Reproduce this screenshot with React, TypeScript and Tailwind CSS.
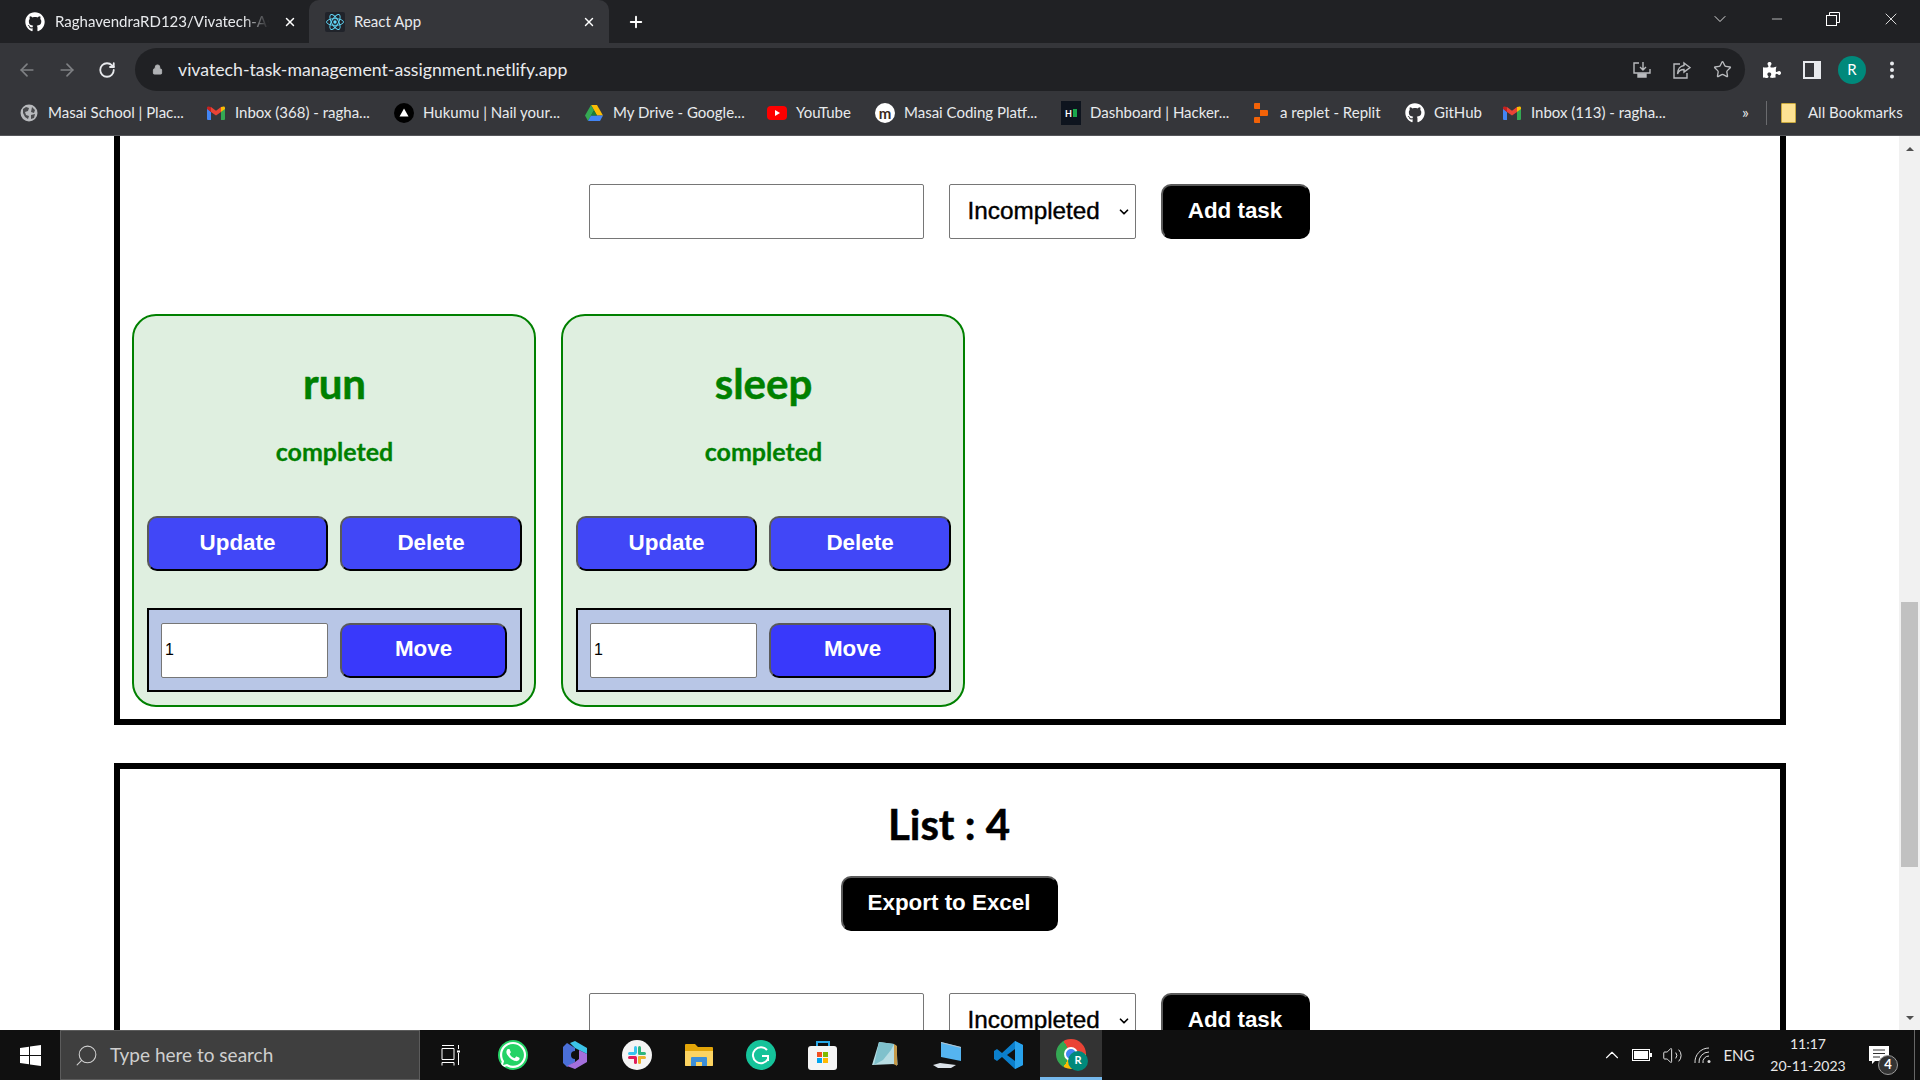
import { FaGithub, FaWhatsapp, FaPuzzlePiece } from 'react-icons/fa';
import { ArrowLeft, ArrowRight, RotateCw, Lock, Star, ChevronDown, ChevronUp, X, Plus, Minus, Search, Volume2 } from 'lucide-react';

const uiFont = "font-['Lato',sans-serif]";
const arial = "font-['Liberation_Sans',Arial,sans-serif]";

function ReactIcon() {
  return (
    <svg width="20" height="20" viewBox="0 0 20 20">
      <rect width="20" height="20" fill="#20232a" rx="2" />
      <g fill="none" stroke="#61dafb" strokeWidth="0.9">
        <ellipse cx="10" cy="10" rx="8.5" ry="3.4" />
        <ellipse cx="10" cy="10" rx="8.5" ry="3.4" transform="rotate(60 10 10)" />
        <ellipse cx="10" cy="10" rx="8.5" ry="3.4" transform="rotate(120 10 10)" />
      </g>
      <circle cx="10" cy="10" r="1.7" fill="#61dafb" />
    </svg>
  );
}

function Gmail() {
  return (
    <svg width="18" height="14" viewBox="0 0 18 14">
      <path d="M0 2v11a1 1 0 0 0 1 1h3V6z" fill="#4285f4" />
      <path d="M18 2v11a1 1 0 0 1-1 1h-3V6z" fill="#34a853" />
      <path d="M14 1v5l4-3V2a1.500 1.500 0 0 0-2.500-1.200z" fill="#fbbc04" />
      <path d="M4 1v5l5 3.500L14 6V1L9 4.800z" fill="#ea4335" />
      <path d="M0 2v1l4 3V1L2.500.800A1.500 1.500 0 0 0 0 2z" fill="#c5221f" />
    </svg>
  );
}

function Globe() {
  return (
    <svg width="18" height="18" viewBox="0 0 18 18">
      <circle cx="9" cy="9" r="8.500" fill="#b8babd" />
      <path d="M3 5l3-2 3 1-1 3-3 1 1 3 3 1-1 3-3-2-2-4zM12 3l3 3-1 3-3-1zM11 11l4-1-1 4-3 1z" fill="#4a4b4e" />
    </svg>
  );
}

function Hukumu() {
  return (
    <svg width="20" height="20" viewBox="0 0 20 20">
      <circle cx="10" cy="10" r="10" fill="#000" />
      <path d="M10 5.500l4.500 8h-9z" fill="#fff" />
    </svg>
  );
}

function Drive() {
  return (
    <svg width="18" height="16" viewBox="0 0 18 16">
      <path d="M6 0h6l6 10.500h-6z" fill="#fbbc04" />
      <path d="M6 0l3 5.300L3 16 0 10.500z" fill="#34a853" />
      <path d="M3 16l3-5.500h12L15 16z" fill="#4285f4" />
      <path d="M6 10.500L9 5.300l3 5.200z" fill="#188038" />
    </svg>
  );
}

function Youtube() {
  return (
    <svg width="20" height="14" viewBox="0 0 20 14">
      <rect width="20" height="14" rx="4" fill="#f00" />
      <path d="M8 4l5 3-5 3z" fill="#fff" />
    </svg>
  );
}

function Masai() {
  return (
    <div className="flex h-[20px] w-[20px] items-center justify-center rounded-full bg-white text-[15px] leading-[18px] font-bold text-[#3b2a20]">
      m
    </div>
  );
}

function Hacker() {
  return (
    <div className="flex h-[24px] w-[20px] items-center justify-center gap-px bg-[#0e141e]">
      <span className="text-[9px] leading-none font-bold text-white">H</span>
      <span className="h-[8px] w-[4px] bg-[#1ba94c]" />
    </div>
  );
}

function Replit() {
  return (
    <svg width="14" height="20" viewBox="0 0 14 20">
      <path d="M0 1a1 1 0 0 1 1-1h5v6H1a1 1 0 0 1-1-1zM6 7h7a1 1 0 0 1 1 1v4a1 1 0 0 1-1 1H6zM0 15a1 1 0 0 1 1-1h5v6H1a1 1 0 0 1-1-1z" fill="#f26207" />
    </svg>
  );
}

const bookmarks = [
  { label: 'Masai School | Plac...', icon: <Globe />, w: 'w-[187px]' },
  { label: 'Inbox (368) - ragha...', icon: <Gmail />, w: 'w-[188px]' },
  { label: 'Hukumu | Nail your...', icon: <Hukumu />, w: 'w-[190px]' },
  { label: 'My Drive - Google...', icon: <Drive />, w: 'w-[183px]' },
  { label: 'YouTube', icon: <Youtube />, w: 'w-[108px]' },
  { label: 'Masai Coding Platf...', icon: <Masai />, w: 'w-[186px]' },
  { label: 'Dashboard | Hacker...', icon: <Hacker />, w: 'w-[190px]' },
  { label: 'a replet - Replit', icon: <Replit />, w: 'w-[154px]' },
  { label: 'GitHub', icon: <FaGithub className="text-[20px] text-white" />, w: 'w-[97px]' },
  { label: 'Inbox (113) - ragha...', icon: <Gmail />, w: 'w-[190px]' },
];

function Browser() {
  return (
    <header className={`${uiFont} shrink-0`}>
      <div className="flex h-[43px] items-end bg-[#202124] text-[15px] text-[#e8eaed]">
        <div className="flex h-[43px] w-[309px] items-center pl-[25px]">
          <FaGithub className="mr-[10px] shrink-0 text-[20px] text-white" />
          <span className="w-[214px] overflow-hidden whitespace-nowrap [mask-image:linear-gradient(90deg,#000_88%,transparent)]">
            RaghavendraRD123/Vivatech-Assignment
          </span>
          <X size={14} strokeWidth={2.5} className="ml-[14px] text-white" />
        </div>
        <div className="flex h-[43px] w-[300px] items-center rounded-t-[10px] bg-[#35363a] pl-[16px]">
          <ReactIcon />
          <span className="ml-[9px] flex-1">React App</span>
          <X size={14} strokeWidth={2.5} className="mr-[13px] text-white" />
        </div>
        <div className="flex h-[43px] w-[54px] items-center justify-center">
          <Plus size={18} strokeWidth={2.5} className="text-white" />
        </div>
        <div className="ml-auto flex h-[43px] items-center pb-[5px] text-white">
          <ChevronDown size={20} strokeWidth={1} className="mr-[39px]" />
          <Minus size={16} strokeWidth={1} className="mr-[41px]" />
          <svg width="14" height="14" viewBox="0 0 14 14" fill="none" stroke="#fff" className="mr-[41px]">
            <rect x="0.500" y="3.500" width="10" height="10" />
            <path d="M3.500 3.500v-3h10v10h-3" />
          </svg>
          <X size={20} strokeWidth={1} className="mr-[19px]" />
        </div>
      </div>
      <div className="flex h-[48px] items-start bg-[#35363a] pl-[7px] pt-[5px]">
        <div className="flex h-[43px] w-[120px] items-center">
          <ArrowLeft size={20} className="mx-[10px] text-[#7f8184]" />
          <ArrowRight size={20} className="mx-[10px] text-[#7f8184]" />
          <RotateCw size={18} strokeWidth={2.4} className="mx-[11px] text-[#e8eaed]" />
        </div>
        <div className="ml-[8px] flex h-[43px] w-[1610px] items-center rounded-full bg-[#202124] pl-[17px]">
          <Lock size={11} fill="#b0b2b5" className="text-[#b0b2b5]" />
          <span className="ml-[15px] flex-1 pt-px text-[17.700px] text-[#e8eaed]">vivatech-task-management-assignment.netlify.app</span>
          <svg width="18" height="18" viewBox="0 0 18 18" fill="none" stroke="#b9bbbe" strokeWidth="1.400" className="mr-[22px]">
            <path d="M6 2H1v10h16V8M10 1v8M7 6l3 3 3-3" />
            <path d="M5 13h8v3H5z" fill="#b9bbbe" />
          </svg>
          <svg width="18" height="18" viewBox="0 0 18 18" fill="none" stroke="#b9bbbe" strokeWidth="1.400" className="mr-[22px]">
            <path d="M7 3H1v14h13v-5M11 2l6 4.500-6 4.500V8.500C8 8.500 5.500 10 4.500 13c0-5 3-8 6.500-8.500z" />
          </svg>
          <Star size={19} strokeWidth={1.700} className="mr-[13px] text-[#b9bbbe]" />
        </div>
        <div className="ml-[7px] flex h-[43px] items-center text-white">
          <div className="flex w-[40px] justify-center"><FaPuzzlePiece size={18} /></div>
          <div className="flex w-[40px] justify-center">
            <svg width="18" height="18" viewBox="0 0 18 18"><path d="M0 0h18v18H0z" fill="#e8eaed" /><path d="M2 2h9v14H2z" fill="#35363a" /></svg>
          </div>
          <div className="flex w-[40px] justify-center">
            <div className="flex h-[28px] w-[28px] items-center justify-center rounded-full bg-[#00897b] text-[15px]">R</div>
          </div>
          <div className="flex w-[40px] justify-center">
            <svg width="4" height="18" viewBox="0 0 4 18" fill="#e8eaed"><circle cx="2" cy="2.500" r="2" /><circle cx="2" cy="9" r="2" /><circle cx="2" cy="15.500" r="2" /></svg>
          </div>
        </div>
      </div>
      <div className="box-content flex h-[44px] items-center border-b border-[#55565a] bg-[#35363a] pl-[19px] text-[15px] text-[#e8eaed]">
        {bookmarks.map((b) => (
          <div key={b.label + b.w} className={`flex items-center ${b.w}`}>
            <div className="mr-[9px] flex w-[20px] shrink-0 items-center justify-center">{b.icon}</div>
            <span className="pb-[2px] whitespace-nowrap">{b.label}</span>
          </div>
        ))}
        <span className="ml-[50px] w-[24px] pb-[2px] text-[16px]">»</span>
        <div className="h-[24px] w-px bg-[#6a6b6e]" />
        <div className="ml-[14px] mr-[12px] h-[20px] w-[15px] rounded-[1px] border border-[#c9a93e] bg-[#fde293]" />
        <span className="pb-[2px] whitespace-nowrap">All Bookmarks</span>
      </div>
    </header>
  );
}

const pushBtn = 'border-2 border-t-[#5a5a5a] border-l-[#5a5a5a] border-r-black border-b-black pb-[2px]';

function AddForm() {
  return (
    <div className="flex justify-center gap-[25px] pr-[2px]">
      <input className="h-[55px] w-[335px] rounded-[2px] border border-[#767676] bg-white" />
      <div className="relative h-[55px] w-[187px]">
        <select defaultValue="Incompleted" className={`${arial} h-[55px] w-[187px] appearance-none rounded-[2px] border border-[#767676] bg-white pl-[18px] text-[24.300px] text-black [-webkit-text-stroke:0.4px_black]`}>
          <option>Incompleted</option>
          <option>Completed</option>
        </select>
        <ChevronDown size={14} strokeWidth={3} className="pointer-events-none absolute top-[21px] right-[5px] text-black" />
      </div>
      <button className={`${arial} ${pushBtn} h-[55px] w-[149px] rounded-[10px] bg-black text-[22.400px] font-bold text-white`}>Add task</button>
    </div>
  );
}

function TaskCard({ title }: { title: string }) {
  return (
    <article className="h-[393px] w-[404px] rounded-[24px] border-2 border-[#008000] bg-[#dfefe0] pr-[12px] pl-[13px] text-center text-[#008000]">
      <h3 className={`${uiFont} mt-[43px] text-[42px] leading-[48px] font-bold [-webkit-text-stroke:0.5px_#008000]`}>{title}</h3>
      <p className={`${uiFont} mt-[28px] text-[25px] leading-[32px] font-bold [-webkit-text-stroke:0.3px_#008000]`}>completed</p>
      <div className={`${arial} mt-[49px] flex gap-[12px] text-[22.400px] font-bold text-white`}>
        <button className={`${pushBtn} h-[55px] w-[181px] rounded-[10px] bg-[#4147f7]`}>Update</button>
        <button className={`${pushBtn} h-[55px] w-[182px] rounded-[10px] bg-[#4147f7]`}>Delete</button>
      </div>
      <div className="mt-[37px] flex h-[84px] w-[375px] items-center gap-[12px] border-2 border-black bg-[#b8c6e6] pl-[12px]">
        <input type="number" defaultValue={1} className={`${arial} h-[55px] w-[167px] rounded-[2px] border border-[#767676] bg-white pl-[3px] text-[16px] text-black`} />
        <button className={`${arial} ${pushBtn} h-[55px] w-[167px] rounded-[10px] bg-[#3939fb] text-[22.400px] font-bold text-white`}>Move</button>
      </div>
    </article>
  );
}

function Scrollbar() {
  return (
    <div className="flex w-[21px] shrink-0 flex-col bg-[#f1f1f1]">
      <div className="flex h-[15px] items-end justify-center">
        <div className="h-0 w-0 border-x-[4px] border-b-[4px] border-x-transparent border-b-[#505050]" />
      </div>
      <div className="mx-[2px] mt-[451px] h-[265px] bg-[#c1c1c1]" />
      <div className="flex flex-1 items-end justify-center pb-[10px]">
        <div className="h-0 w-0 border-x-[4px] border-t-[4px] border-x-transparent border-t-[#505050]" />
      </div>
    </div>
  );
}

function Page() {
  return (
    <main className="flex min-h-0 flex-1 overflow-hidden bg-white">
      <div className="flex-1">
        <section className="ml-[114px] h-[589px] w-[1672px] border-x-[6px] border-b-[6px] border-black pt-[48px]">
          <AddForm />
          <div className="mt-[75px] flex gap-[25px] pl-[12px]">
            <TaskCard title="run" />
            <TaskCard title="sleep" />
          </div>
        </section>
        <section className="ml-[114px] mt-[38px] w-[1672px] border-x-[6px] border-t-[6px] border-black pt-[31px] text-center">
          <div className="pr-[2px]">
            <h2 className={`${uiFont} text-[42px] leading-[48px] font-bold text-black [-webkit-text-stroke:0.5px_black]`}>List : 4</h2>
            <button className={`${arial} ${pushBtn} mt-[28px] h-[55px] w-[217px] rounded-[10px] bg-black text-[22.400px] font-bold text-white`}>Export to Excel</button>
          </div>
          <div className="mt-[62px]"><AddForm /></div>
        </section>
      </div>
      <Scrollbar />
    </main>
  );
}

function Slot({ children, active }: { children: React.ReactNode; active?: boolean }) {
  return (
    <div className={`flex h-[50px] w-[62px] items-center justify-center ${active ? 'border-b-[3px] border-[#76b9ed] bg-[#333]' : ''}`}>
      {children}
    </div>
  );
}

function Taskbar() {
  return (
    <footer className={`${uiFont} flex h-[50px] shrink-0 items-center bg-[#101010] text-white`}>
      <div className="flex w-[60px] justify-center">
        <svg width="21" height="21" viewBox="0 0 21 21" fill="#fff"><path d="M0 3l9-1.300V10H0zM10 1.500L21 0v10H10zM0 11h9v8.300L0 18zM10 11h11v10l-11-1.500z" /></svg>
      </div>
      <div className="flex h-[50px] w-[360px] items-center border border-[#5c5c5c] bg-[#3f3f3f] pl-[13px] text-[19px] text-[#cfcfcf]">
        <Search size={25} strokeWidth={1} className="mr-[11px] -scale-x-100" />
        Type here to search
      </div>
      <div className="flex">
        <Slot>
          <svg width="20" height="22" viewBox="0 0 20 22" fill="none" stroke="#fff"><path d="M1 1.500h12M1 4.500h12v11H1zM1 18.500h12M1 18.500v3M13 18.500v3M17.500 1v4M17.500 9v12" /><path d="M16 6.500h3v2h-3z" fill="#fff" stroke="none" /></svg>
        </Slot>
        <Slot><FaWhatsapp className="rounded-full bg-[#25d366] text-[30px]" /></Slot>
        <Slot>
          <svg width="26" height="30" viewBox="0 0 26 30">
            <path d="M5 3l8 5v14l-8 5L1 23V7z" fill="#4a6fd8" />
            <path d="M13 1l12 7v6l-8-4-4-2-5-5z" fill="#3cc3e8" />
            <path d="M25 14v8l-12 7-8-3 8-4 4-3v-9z" fill="#a46fdc" />
            <circle cx="13" cy="15" r="4" fill="#101010" />
          </svg>
        </Slot>
        <Slot>
          <svg width="30" height="30" viewBox="0 0 30 30">
            <circle cx="15" cy="15" r="15" fill="#f4f4f4" />
            <rect x="12" y="6" width="3" height="8" rx="1.500" fill="#36c5f0" />
            <rect x="6" y="12" width="8" height="3" rx="1.500" fill="#36c5f0" />
            <rect x="16" y="6" width="3" height="8" rx="1.500" fill="#2eb67d" />
            <rect x="16" y="12" width="8" height="3" rx="1.500" fill="#2eb67d" />
            <rect x="16" y="16" width="3" height="8" rx="1.500" fill="#ecb22e" />
            <rect x="16" y="16" width="8" height="3" rx="1.500" fill="#ecb22e" />
            <rect x="12" y="16" width="3" height="8" rx="1.500" fill="#e01e5a" />
            <rect x="6" y="16" width="8" height="3" rx="1.500" fill="#e01e5a" />
          </svg>
        </Slot>
        <Slot>
          <svg width="28" height="24" viewBox="0 0 28 24">
            <path d="M0 2a1 1 0 0 1 1-1h9l3 3h14a1 1 0 0 1 1 1v17a1 1 0 0 1-1 1H1a1 1 0 0 1-1-1z" fill="#e3a508" />
            <path d="M0 8h28v14a1 1 0 0 1-1 1H1a1 1 0 0 1-1-1z" fill="#fcd462" />
            <path d="M6 23v-8a1 1 0 0 1 1-1h14a1 1 0 0 1 1 1v8h-5v-4h-6v4z" fill="#3d8fd8" />
          </svg>
        </Slot>
        <Slot>
          <div className="flex h-[30px] w-[30px] items-center justify-center rounded-full bg-[#15c39a]">
            <svg width="20" height="20" viewBox="0 0 20 20" fill="none" stroke="#fff" strokeWidth="2"><path d="M16 5a8 8 0 1 0 1 9M11 11h6v5" /></svg>
          </div>
        </Slot>
        <Slot>
          <svg width="30" height="30" viewBox="0 0 30 30">
            <path d="M9 7V2h12v5" fill="none" stroke="#29a8e8" strokeWidth="2" />
            <rect y="6" width="29" height="24" rx="3" fill="#f5f5f5" />
            <rect x="9" y="12" width="5" height="5" fill="#f25022" />
            <rect x="15" y="12" width="5" height="5" fill="#7fba00" />
            <rect x="9" y="18" width="5" height="5" fill="#00a4ef" />
            <rect x="15" y="18" width="5" height="5" fill="#ffb900" />
          </svg>
        </Slot>
        <Slot>
          <svg width="28" height="28" viewBox="0 0 28 28">
            <path d="M9 2l16 2 2 20-6-1z" fill="#8a8f7a" />
            <path d="M8 1l15 2v20L1 24z" fill="#b8dde3" />
            <path d="M8 1l15 2-3 6-8 10-9 5z" fill="#7fc1cc" />
            <path d="M23 3l3 2v20l-3-2z" fill="#c59a4a" />
          </svg>
        </Slot>
        <Slot>
          <svg width="28" height="28" viewBox="0 0 28 28">
            <path d="M8 1l20 5v14L8 16z" fill="#55b4f0" />
            <path d="M8 1l20 5v1L8 2z" fill="#b7c2cb" />
            <path d="M0 24l7-2 16 2-5 3H5z" fill="#dbe2e8" />
          </svg>
        </Slot>
        <Slot>
          <svg width="30" height="30" viewBox="0 0 30 30">
            <path d="M21 1l8 4v20l-8 4-13-12-5 4-3-2V11l3-2 5 4z" fill="#0b7fcc" />
            <path d="M21 1l8 4v20l-8 4z" fill="#28a2ec" />
            <path d="M21 9l-8 6 8 6z" fill="#101010" />
          </svg>
        </Slot>
        <Slot active>
          <div className="relative h-[30px] w-[30px] rounded-full bg-[conic-gradient(from_-30deg,#ea4335_0deg_120deg,#fbbc04_120deg_240deg,#34a853_240deg_360deg)]">
            <div className="absolute inset-[8px] rounded-full border-2 border-white bg-[#4285f4]" />
            <div className="absolute -right-[2px] -bottom-[2px] flex h-[20px] w-[20px] items-center justify-center rounded-full bg-[#00897b] text-[11px] font-bold text-white">R</div>
          </div>
        </Slot>
      </div>
      <div className="ml-auto flex items-center">
        <div className="flex w-[30px] justify-center"><ChevronUp size={22} strokeWidth={1.200} /></div>
        <div className="flex w-[30px] justify-center">
          <svg width="20" height="12" viewBox="0 0 20 12" fill="none"><rect x="0.500" y="0.500" width="17" height="11" stroke="#fff" /><rect x="2" y="2" width="14" height="8" fill="#fff" /><rect x="18" y="4" width="2" height="4" fill="#fff" /></svg>
        </div>
        <div className="flex w-[30px] justify-center"><Volume2 size={21} strokeWidth={1} /></div>
        <div className="flex w-[32px] justify-center">
          <svg width="18" height="18" viewBox="0 0 18 18" fill="none" stroke="#ddd" strokeWidth="1"><path d="M1 17A14 14 0 0 1 15 2M5 17A10 10 0 0 1 15 6M9 17a6 6 0 0 1 6-7" /><circle cx="15" cy="15.500" r="1.500" fill="#ddd" stroke="none" /></svg>
        </div>
        <div className="w-[40px] text-center text-[15px] text-[#e8e8e8]">ENG</div>
        <div className="w-[98px] text-center text-[14px] leading-[22px] text-[#e8e8e8]">
          <div>11:17</div>
          <div>20-11-2023</div>
        </div>
        <div className="relative flex h-[50px] w-[44px] items-center justify-center">
          <svg width="20" height="18" viewBox="0 0 20 18"><path d="M0 0h20v15H6l-3 3v-3H0z" fill="#fff" /><path d="M4 4h12M4 7.500h12M4 11h7" stroke="#333" /></svg>
          <div className="absolute right-[3px] bottom-[5px] flex h-[20px] w-[20px] items-center justify-center rounded-full border border-[#999] bg-[#333] text-[13px] font-bold">4</div>
        </div>
        <div className="ml-[13px] h-[50px] w-[6px] border-l border-[#666]" />
      </div>
    </footer>
  );
}

export default function App() {
  return (
    <div className="flex h-screen w-screen flex-col overflow-hidden">
      <Browser />
      <Page />
      <Taskbar />
    </div>
  );
}
